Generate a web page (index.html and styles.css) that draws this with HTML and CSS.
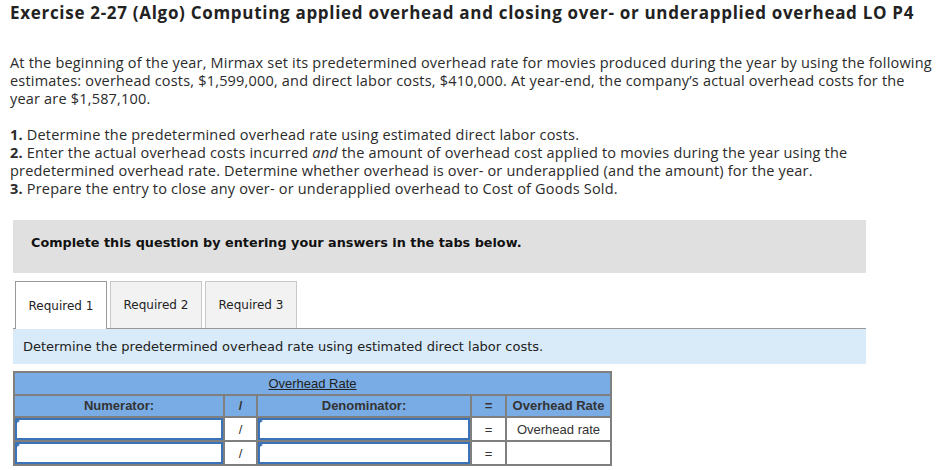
FILE: index.html
```html
<!DOCTYPE html>
<html lang="en">
<head>
    <meta charset="UTF-8">
    <title>Exercise 2-27</title>
    <link rel="stylesheet" href="styles.css">
</head>
<body>
    <h1 class="title">Exercise 2-27 (Algo) Computing applied overhead and closing over- or underapplied overhead LO P4</h1>

    <p class="intro">At the beginning of the year, Mirmax set its predetermined overhead rate for movies produced during the year by using the following estimates: overhead costs, $1,599,000, and direct labor costs, $410,000. At year-end, the company’s actual overhead costs for the year are $1,587,100.</p>

    <div class="steps">
        <div class="step"><b>1.</b> Determine the predetermined overhead rate using estimated direct labor costs.</div>
        <div class="step"><b>2.</b> Enter the actual overhead costs incurred <i>and</i> the amount of overhead cost applied to movies during the year using the<br>predetermined overhead rate. Determine whether overhead is over- or underapplied (and the amount) for the year.</div>
        <div class="step"><b>3.</b> Prepare the entry to close any over- or underapplied overhead to Cost of Goods Sold.</div>
    </div>

    <div class="notice">Complete this question by entering your answers in the tabs below.</div>

    <div class="tabs">
        <div class="tab active">Required 1</div>
        <div class="tab">Required 2</div>
        <div class="tab">Required 3</div>
    </div>
    <div class="prompt">Determine the predetermined overhead rate using estimated direct labor costs.</div>

    <table class="rate-table">
        <tr>
            <th colspan="5" class="caption"><u>Overhead Rate</u></th>
        </tr>
        <tr>
            <th class="col-num">Numerator:</th>
            <th class="col-op">/</th>
            <th class="col-den">Denominator:</th>
            <th class="col-op2">=</th>
            <th class="col-res">Overhead Rate</th>
        </tr>
        <tr>
            <td class="entry"><div class="field"></div></td>
            <td class="op">/</td>
            <td class="entry"><div class="field"></div></td>
            <td class="op">=</td>
            <td class="result">Overhead rate</td>
        </tr>
        <tr>
            <td class="entry"><div class="field"></div></td>
            <td class="op">/</td>
            <td class="entry"><div class="field"></div></td>
            <td class="op">=</td>
            <td class="result"></td>
        </tr>
    </table>
</body>
</html>
```

FILE: styles.css
```css
body {
    margin: 0;
    padding: 0 8px 0 10px;
    font-family: "Open Sans", "Liberation Sans", sans-serif;
    color: #2b2b2b;
    background: #fff;
}
.title {
    margin: 2px 0 0;
    font-size: 17px;
    font-weight: bold;
    letter-spacing: 0.7px;
    line-height: 22px;
    color: #222;
}
.intro {
    margin: 30px 0 0;
    font-size: 14.5px;
    letter-spacing: 0.19px;
    line-height: 18px;
}
.steps {
    margin: 18px 0 0;
    font-size: 14.5px;
    letter-spacing: 0.19px;
    line-height: 18px;
}
.notice {
    margin: 22px 72px 0 3px;
    height: 53px;
    padding: 0 0 9px 18px;
    box-sizing: border-box;
    display: flex;
    align-items: center;
    background: #e0e0e0;
    font-family: "DejaVu Sans", Verdana, sans-serif;
    font-size: 12.8px;
    font-weight: bold;
    color: #111;
}
.tabs {
    display: flex;
    gap: 3px;
    margin: 8px 0 0 5px;
}
.tab {
    width: 90px;
    height: 46px;
    display: flex;
    align-items: center;
    justify-content: center;
    background: #f2f2f2;
    border: 1px solid #c8c8c8;
    border-bottom: none;
    font-family: "DejaVu Sans", Verdana, sans-serif;
    font-size: 12px;
    color: #222;
}
.tab.active {
    background: #fff;
    border-color: #999;
    height: 47px;
    margin-bottom: -1px;
}
.prompt {
    margin: 0 72px 0 3px;
    height: 35px;
    padding-left: 10px;
    display: flex;
    align-items: center;
    background: #d9ebf9;
    border-top: 1px solid #999;
    font-family: "DejaVu Sans", Verdana, sans-serif;
    font-size: 13px;
    color: #222;
}
.rate-table {
    margin: 7px 0 0 3px;
    border-collapse: collapse;
    font-family: "Liberation Sans", Arial, sans-serif;
    font-size: 13px;
    color: #333;
}
.rate-table th,
.rate-table td {
    border: 2px solid #7f7f7f;
    height: 20.5px;
    padding: 0;
    text-align: center;
}
.rate-table th {
    background: #79ace4;
    font-weight: bold;
}
.rate-table .caption {
    font-weight: normal;
    color: #222;
}
.col-num { width: 208px; }
.col-op { width: 31px; }
.col-den { width: 212px; }
.col-op2 { width: 33px; }
.col-res { width: 103px; }
.rate-table td.op {
    color: #333;
}
.rate-table td.entry {
    position: relative;
}
.field {
    height: 18px;
    border: 2px solid #3b73b9;
    background: #fff;
}
.entry::before {
    content: "";
    position: absolute;
    left: 0;
    top: 0;
    border-left: 5px solid #3b73b9;
    border-top: 3px solid transparent;
    border-bottom: 3px solid transparent;
}
```
